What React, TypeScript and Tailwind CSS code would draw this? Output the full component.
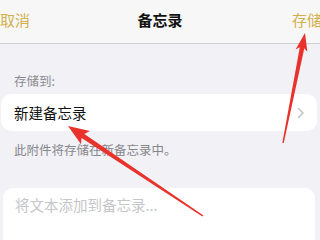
import React from "react";

function Arrow({ x, y, angle, len, hl = 20, hw = 7, sw = 2 }: { x: number; y: number; angle: number; len: number; hl?: number; hw?: number; sw?: number }) {
  const pts = `0,0 ${hl},${-hw} ${hl - 3},${-sw} ${len},-0.7 ${len},0.7 ${hl - 3},${sw} ${hl},${hw}`;
  return <polygon points={pts} fill="#e8322b" transform={`translate(${x},${y}) rotate(${angle})`} />;
}

export default function App() {
  return (
    <div
      className="relative w-[320px] h-[240px] overflow-hidden bg-[#f1f1f6]"
      style={{ fontFamily: '"Noto Sans CJK SC", "Noto Sans", sans-serif' }}
    >
      <div className="h-[44px] bg-[#f7f7f7] border-b border-[#cfcfd2] flex items-center justify-between relative">
        <span className="text-[15px] text-[#d3b04d] leading-none -mt-[5px]">取消</span>
        <span className="absolute left-0 right-0 text-center text-[15px] font-bold text-[#111] leading-none -mt-[5px]">备忘录</span>
        <span className="text-[15px] text-[#d3b04d] mr-[-2px] leading-none -mt-[5px]">存储</span>
      </div>
      <div className="pl-[14px] pt-[29px] text-[12.5px] leading-[16px] text-[#8b8b90]">存储到:</div>
      <div className="mt-[5px] ml-[1px] w-[316px] h-[37px] bg-white rounded-[10px] flex items-center justify-between pl-[13px] pr-[12px]">
        <span className="text-[14.5px] text-[#111]">新建备忘录</span>
        <svg width="8" height="12" viewBox="0 0 8 12">
          <path d="M1.5 1.5 L6 6 L1.5 10.5" fill="none" stroke="#c5c5ca" strokeWidth="1.6" strokeLinecap="round" strokeLinejoin="round" />
        </svg>
      </div>
      <div className="pl-[14px] mt-[11px] text-[12.5px] leading-[16px] text-[#86868b]">此附件将存储在新备忘录中。</div>
      <div className="mt-[30px] ml-[3px] w-[312px] h-[80px] bg-white rounded-[10px] pl-[12px] pt-[4px]">
        <span className="text-[14.5px] text-[#c6c6ca]">将文本添加到备忘录...</span>
      </div>
      <svg className="absolute left-0 top-0 pointer-events-none" width="320" height="240">
        <Arrow x={68} y={126} angle={33.7} len={162} hl={21} hw={8} sw={2.5} />
        <Arrow x={305} y={33} angle={101.3} len={112} hl={18} hw={6} sw={2.3} />
      </svg>
    </div>
  );
}
